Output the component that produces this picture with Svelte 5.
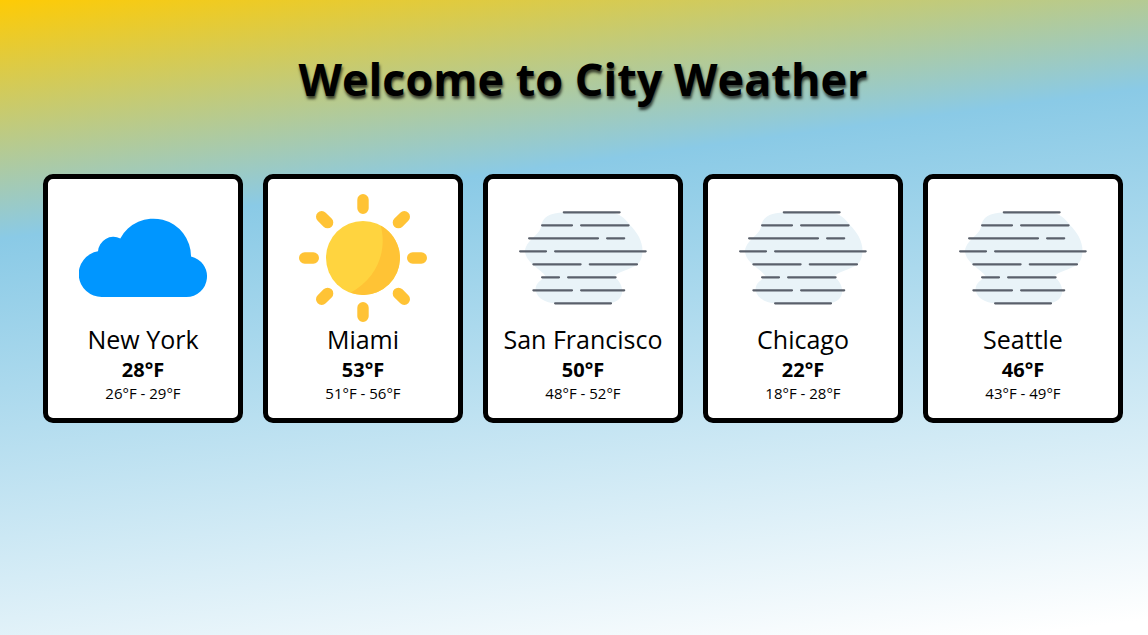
<script>
  const cities = [
    { name: 'New York', icon: 'cloud', temp: 28, low: 26, high: 29 },
    { name: 'Miami', icon: 'sun', temp: 53, low: 51, high: 56 },
    { name: 'San Francisco', icon: 'mist', temp: 50, low: 48, high: 52 },
    { name: 'Chicago', icon: 'mist', temp: 22, low: 18, high: 28 },
    { name: 'Seattle', icon: 'mist', temp: 46, low: 43, high: 49 }
  ];
</script>

<main>
  <h1>Welcome to City Weather</h1>
  <div class="cities">
    {#each cities as city}
      <article class="card">
        <svg class="icon" viewBox="0 0 128 128" aria-hidden="true">
          {#if city.icon === 'cloud'}
            <path fill="#0096ff" d="M23 103H107.5A20.5 20.5 0 0 0 112 62.5A37.6 37.6 0 0 0 41.3 44.4A15.5 15.5 0 0 0 19 57.3A23 23 0 0 0 23 103Z" />
          {:else if city.icon === 'sun'}
            <circle cx="64" cy="64" r="37" fill="#ffd43f" />
            <path fill="#ffc335" d="M81.7 31.5C88 55 80 83 51.5 98.8A37 37 0 0 0 81.7 31.5Z" />
            <path stroke="#ffc335" stroke-width="11.4" stroke-linecap="round" d="M64 5.7V14.3M64 113.7V122.3M5.7 64H14.3M113.7 64H122.3M22.7 22.7L28.6 28.6M105.3 22.7L99.4 28.6M22.7 105.3L28.6 99.4M105.3 105.3L99.4 99.4" />
          {:else}
            <path fill="#e9f3f8" d="M45 18.4C31 18.5 23 23 22 33C20.5 41 7 46 6 57C6.5 69 21 74 27 82.7C20 87 16.5 90 16.5 96C18 104 26 109 37 109.3H89C98 109 103 104 103.3 97C103 91 100 86 95 82.7C100 77 111 76 118.5 70.3C122 67 123.5 62 123.5 57C123.5 47 118 38 111 31.3C106 24 101 19.5 92 18.4Z" />
            <path stroke="#5a606b" stroke-width="2.2" stroke-linecap="round" d="M44.8 18.3H100.6M23.1 31.3H53M62.1 31.3H109.6M10.1 44.3H79M88.1 44.3H105.2M1.1 57.3H27M36.1 57.3H126.7M14.4 70.3H61.6M70.8 70.3H118M23.1 83.3H40M49.1 83.3H96.6M14.4 96.3H53M62.1 96.3H105.2M36.1 109.3H92" />
          {/if}
        </svg>
        <h2>{city.name}</h2>
        <strong>{city.temp}°F</strong>
        <p>{city.low}°F - {city.high}°F</p>
      </article>
    {/each}
  </div>
</main>

<style>
  :global(body) {
    margin: 0;
  }
  main {
    box-sizing: border-box;
    min-height: 100vh;
    padding: 48px 0 48px 18px;
    font-family: 'Open Sans', sans-serif;
    color: #000;
    text-align: center;
    background: linear-gradient(172.5deg, #fecb05 0%, #8acae6 30.4%, #fff 98%);
  }
  h1 {
    margin: 0 0 64px;
    font-size: 45px;
    line-height: 62px;
    font-weight: 700;
    text-shadow: 1px 3px 3px rgba(0, 0, 0, 0.7);
  }
  .cities {
    display: flex;
    flex-wrap: wrap;
    justify-content: center;
    gap: 20px;
  }
  .card {
    box-sizing: border-box;
    width: 200px;
    padding: 15px 8px;
    border: 5px solid #000;
    border-radius: 10px;
    background: #fff;
  }
  .icon {
    display: block;
    width: 128px;
    height: 128px;
    margin: 0 auto;
  }
  h2 {
    margin: 0;
    font-size: 25px;
    line-height: 34px;
    font-weight: 400;
  }
  strong {
    display: block;
    font-size: 20px;
    line-height: 27px;
    font-weight: 700;
  }
  p {
    margin: 0;
    font-size: 15px;
    line-height: 20px;
  }
</style>
